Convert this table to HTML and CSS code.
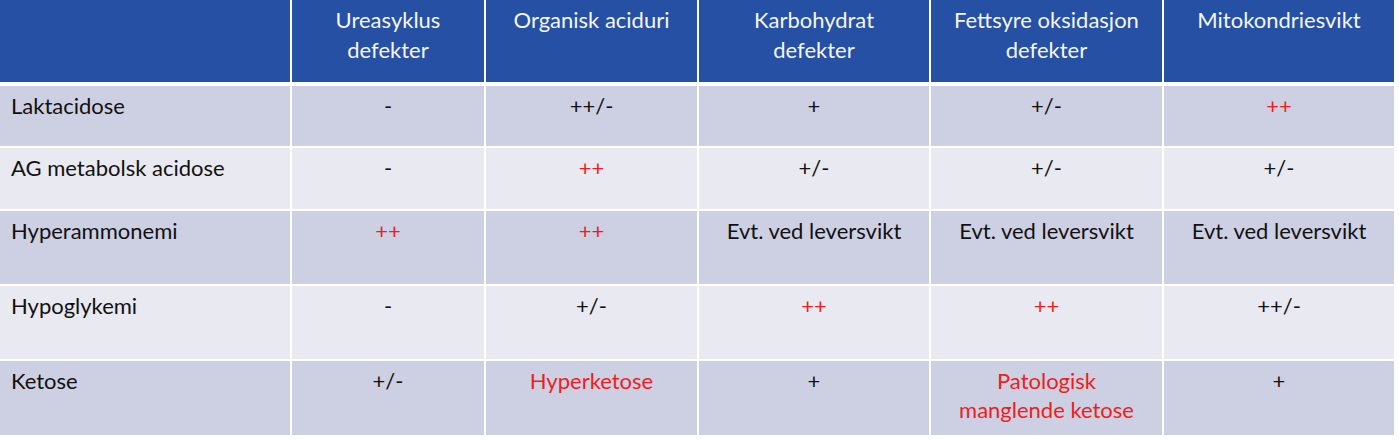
FILE: index.html
```html
<!DOCTYPE html>
<html lang="no">
<head>
<meta charset="utf-8">
<title>Metabolske sykdommer</title>
<link rel="stylesheet" href="styles.css">
</head>
<body>
<div class="table">
  <div class="grid head">
    <div class="cell"></div>
    <div class="cell c">Ureasyklus<br>defekter</div>
    <div class="cell c">Organisk aciduri</div>
    <div class="cell c">Karbohydrat<br>defekter</div>
    <div class="cell c">Fettsyre oksidasjon<br>defekter</div>
    <div class="cell c">Mitokondriesvikt</div>
  </div>
  <div class="grid body">
    <div class="cell dark lab">Laktacidose</div>
    <div class="cell dark c">-</div>
    <div class="cell dark c">++/-</div>
    <div class="cell dark c">+</div>
    <div class="cell dark c">+/-</div>
    <div class="cell dark c red">++</div>

    <div class="cell light lab">AG metabolsk acidose</div>
    <div class="cell light c">-</div>
    <div class="cell light c red">++</div>
    <div class="cell light c">+/-</div>
    <div class="cell light c">+/-</div>
    <div class="cell light c">+/-</div>

    <div class="cell dark lab">Hyperammonemi</div>
    <div class="cell dark c red">++</div>
    <div class="cell dark c red">++</div>
    <div class="cell dark c">Evt. ved leversvikt</div>
    <div class="cell dark c">Evt. ved leversvikt</div>
    <div class="cell dark c">Evt. ved leversvikt</div>

    <div class="cell light lab">Hypoglykemi</div>
    <div class="cell light c">-</div>
    <div class="cell light c">+/-</div>
    <div class="cell light c red">++</div>
    <div class="cell light c red">++</div>
    <div class="cell light c">++/-</div>

    <div class="cell dark lab">Ketose</div>
    <div class="cell dark c">+/-</div>
    <div class="cell dark c red">Hyperketose</div>
    <div class="cell dark c">+</div>
    <div class="cell dark c red">Patologisk<br>manglende ketose</div>
    <div class="cell dark c">+</div>
  </div>
</div>
</body>
</html>
```

FILE: styles.css
```css
html, body {
  margin: 0;
  padding: 0;
  background: #ffffff;
}
body {
  font-family: "Lato", "Liberation Sans", sans-serif;
  font-size: 22px;
  line-height: 29px;
  color: #111111;
}
.table {
  width: 1394px;
  display: flex;
  flex-direction: column;
  gap: 4px;
}
.grid {
  display: grid;
  grid-template-columns: 290px 192px 211px 230px 231px 230px;
  column-gap: 2px;
  row-gap: 2px;
}
.head {
  grid-template-rows: 82px;
}
.body {
  grid-template-rows: 60px 61px 73px 73px 74px;
}
.cell {
  padding: 5px 8px 0 11px;
  box-sizing: border-box;
}
.head .cell {
  background: #2550a3;
  color: #f4f6fb;
  padding-top: 5px;
  line-height: 30px;
}
.c {
  text-align: center;
  padding-left: 2px;
  padding-right: 2px;
}
.dark {
  background: #cdd0e2;
}
.light {
  background: #e8e9f1;
}
.red {
  color: #f21c1c;
}
```
